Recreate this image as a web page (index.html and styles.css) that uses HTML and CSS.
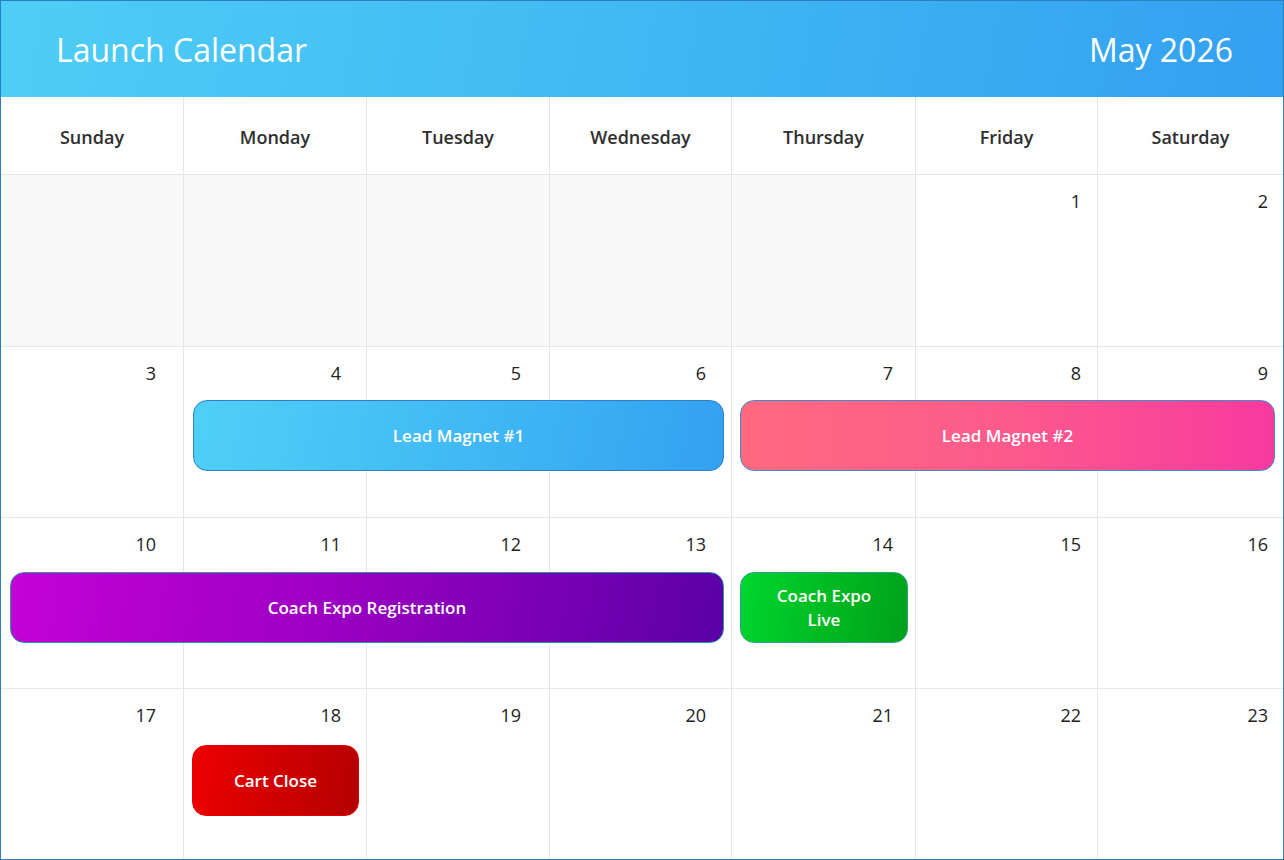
FILE: index.html
```html
<!DOCTYPE html>
<html lang="en">
<head>
<meta charset="utf-8">
<title>Launch Calendar</title>
<link rel="stylesheet" href="styles.css">
</head>
<body>
<div class="calendar">
  <header class="cal-header">
    <h1 class="cal-title">Launch Calendar</h1>
    <div class="cal-month">May 2026</div>
  </header>
  <div class="weekdays">
    <div class="weekday">Sunday</div>
    <div class="weekday">Monday</div>
    <div class="weekday">Tuesday</div>
    <div class="weekday">Wednesday</div>
    <div class="weekday">Thursday</div>
    <div class="weekday">Friday</div>
    <div class="weekday">Saturday</div>
  </div>
  <div class="weeks">
    <div class="week">
      <div class="day empty"></div>
      <div class="day empty"></div>
      <div class="day empty"></div>
      <div class="day empty"></div>
      <div class="day empty"></div>
      <div class="day"><span class="num">1</span></div>
      <div class="day"><span class="num">2</span></div>
    </div>
    <div class="week">
      <div class="day"><span class="num">3</span></div>
      <div class="day"><span class="num">4</span></div>
      <div class="day"><span class="num">5</span></div>
      <div class="day"><span class="num">6</span></div>
      <div class="day"><span class="num">7</span></div>
      <div class="day"><span class="num">8</span></div>
      <div class="day"><span class="num">9</span></div>
      <div class="event ev-blue span-mon-wed">Lead Magnet #1</div>
      <div class="event ev-pink span-thu-sat">Lead Magnet #2</div>
    </div>
    <div class="week">
      <div class="day"><span class="num">10</span></div>
      <div class="day"><span class="num">11</span></div>
      <div class="day"><span class="num">12</span></div>
      <div class="day"><span class="num">13</span></div>
      <div class="day"><span class="num">14</span></div>
      <div class="day"><span class="num">15</span></div>
      <div class="day"><span class="num">16</span></div>
      <div class="event ev-purple span-sun-wed">Coach Expo Registration</div>
      <div class="event ev-green span-thu">Coach Expo<br>Live</div>
    </div>
    <div class="week">
      <div class="day"><span class="num">17</span></div>
      <div class="day"><span class="num">18</span></div>
      <div class="day"><span class="num">19</span></div>
      <div class="day"><span class="num">20</span></div>
      <div class="day"><span class="num">21</span></div>
      <div class="day"><span class="num">22</span></div>
      <div class="day"><span class="num">23</span></div>
      <div class="event ev-red span-mon">Cart Close</div>
    </div>
  </div>
</div>
</body>
</html>
```
FILE: styles.css
```css
* { box-sizing: border-box; }
html, body { margin: 0; padding: 0; background: #ffffff; }
body { font-family: "Open Sans", "Noto Sans", sans-serif; }

.calendar {
  --cols: 183px 183px 183px 182px 184px 182px 185px;
  width: 1284px;
  height: 860px;
  border: 1px solid #2c7dc2;
  display: flex;
  flex-direction: column;
  overflow: hidden;
}

.cal-header {
  height: 96px;
  flex: none;
  display: flex;
  align-items: center;
  justify-content: space-between;
  padding: 0 50px 0 55px;
  background: linear-gradient(100deg, #4ecef6 0%, #40b8f3 50%, #33a0f1 100%);
  color: #fff;
}
.cal-title, .cal-month {
  margin: 0;
  font-size: 32px;
  font-weight: 400;
  letter-spacing: 0;
}

.weekdays {
  flex: none;
  height: 78px;
  display: grid;
  grid-template-columns: var(--cols);
  border-bottom: 1px solid #e6e6e6;
}
.weekday {
  display: flex;
  align-items: center;
  justify-content: center;
  padding-top: 2px;
  font-size: 18px;
  font-weight: 600;
  color: #2f2f2f;
  border-right: 1px solid #e6e6e6;
  text-shadow: 0 0 12px rgba(0,0,0,0.06);
}
.weekday:last-child { border-right: 0; }

.weeks {
  flex: 1;
  display: grid;
  grid-template-rows: repeat(4, 1fr);
}
.week {
  display: grid;
  grid-template-columns: var(--cols);
}
.week + .week { border-top: 1px solid #e6e6e6; }

.day {
  grid-row: 1;
  border-right: 1px solid #e6e6e6;
  text-align: right;
  padding: 14px 20px 0 0;
  font-size: 18px;
  line-height: 24px;
  color: #222;
}
.day:nth-child(1) { grid-column: 1; padding-right: 27px; }
.day:nth-child(2) { grid-column: 2; padding-right: 25px; }
.day:nth-child(3) { grid-column: 3; padding-right: 28px; }
.day:nth-child(4) { grid-column: 4; padding-right: 25px; }
.day:nth-child(5) { grid-column: 5; padding-right: 22px; }
.day:nth-child(6) { grid-column: 6; padding-right: 16px; }
.day:nth-child(7) { grid-column: 7; padding-right: 15px; border-right: 0; }
.day.empty { background: #f9f9f9; }

.event {
  grid-row: 1;
  align-self: start;
  margin: 53px 8px 0 8px;
  height: 71px;
  border-radius: 14px;
  border: 1px solid transparent;
  display: flex;
  align-items: center;
  justify-content: center;
  text-align: center;
  color: #fff;
  font-size: 17px;
  font-weight: 600;
  line-height: 24px;
  z-index: 1;
}
.span-mon-wed { grid-column: 2 / 5; margin-left: 9px; }
.span-thu-sat { grid-column: 5 / 8; }
.span-sun-wed { grid-column: 1 / 5; margin-left: 9px; margin-top: 54px; }
.span-thu { grid-column: 5 / 6; margin-top: 54px; }
.span-mon { grid-column: 2 / 3; margin-top: 56px; }

.ev-blue {
  background: linear-gradient(100deg, #4fd0f7 0%, #41baf4 50%, #33a1f1 100%);
  border-color: #2f80c6;
}
.ev-pink {
  background: linear-gradient(90deg, #ff6a80 0%, #fc5a8c 50%, #f83a9f 100%);
  border-color: #3a8fcf;
}
.ev-purple {
  background: linear-gradient(100deg, #c402d6 0%, #9c00c2 45%, #5b00a8 100%);
  border-color: #239b9b;
}
.ev-green {
  background: linear-gradient(100deg, #00d62e 0%, #00bb22 50%, #00a11a 100%);
  border-color: #2f9d8e;
}
.ev-red {
  background: linear-gradient(100deg, #ee0000 0%, #d00000 50%, #b40000 100%);
  border-color: #e40000;
}
```
